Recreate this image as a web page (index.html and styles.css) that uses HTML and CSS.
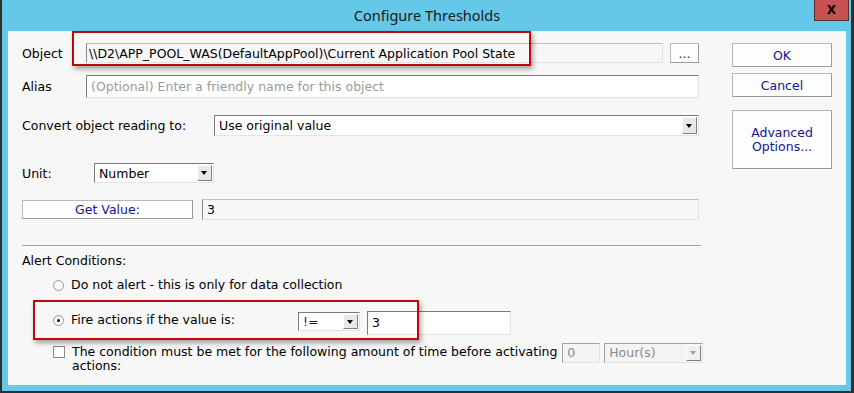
FILE: index.html
```html
<!DOCTYPE html>
<html lang="en">
<head>
    <meta charset="UTF-8">
    <title>Configure Thresholds</title>
    <link rel="stylesheet" href="styles.css">
</head>
<body>
    <div class="window">
        <div class="titlebar">
            <span></span>
            <div class="title">Configure Thresholds</div>
            <button class="close">X</button>
        </div>
        <div class="client">
            <div class="highlight hl-object"></div>
            <div class="highlight hl-fire"></div>

            <div class="form">
                <div class="row row-object">
                    <label class="lbl lbl-object">Object</label>
                    <div class="field readonly f-object">\\D2\APP_POOL_WAS(DefaultAppPool)\Current Application Pool State</div>
                    <button class="btn btn-browse">...</button>
                </div>
                <div class="row row-alias">
                    <label class="lbl lbl-object">Alias</label>
                    <div class="field f-alias placeholder">(Optional) Enter a friendly name for this object</div>
                </div>
                <div class="row row-convert">
                    <label class="lbl lbl-convert">Convert object reading to:</label>
                    <div class="field select f-convert"><span>Use original value</span><i class="arrow"></i></div>
                </div>
                <div class="row row-unit">
                    <label class="lbl lbl-unit">Unit:</label>
                    <div class="field select f-unit"><span>Number</span><i class="arrow"></i></div>
                </div>
                <div class="row row-get">
                    <button class="btn btn-get">Get Value:</button>
                    <div class="field readonly f-value">3</div>
                </div>
                <div class="separator"></div>
                <div class="section-title">Alert Conditions:</div>
                <div class="option opt-none">
                    <span class="radio"></span>
                    <span>Do not alert - this is only for data collection</span>
                </div>
                <div class="option opt-fire">
                    <div class="fire-label">
                        <span class="radio checked"></span>
                        <span>Fire actions if the value is:</span>
                    </div>
                    <div class="field select f-op"><span class="op">!=</span><i class="arrow"></i></div>
                    <div class="field f-threshold">3</div>
                </div>
                <div class="option opt-time">
                    <span class="checkbox"></span>
                    <span class="time-text">The condition must be met for the following amount of time before activating<br>actions:</span>
                    <div class="field disabled f-amount">0</div>
                    <div class="field select disabled f-period"><span>Hour(s)</span><i class="arrow"></i></div>
                </div>
            </div>

            <div class="side">
                <button class="btn btn-side">OK</button>
                <button class="btn btn-side">Cancel</button>
                <button class="btn btn-side btn-advanced">Advanced<br>Options...</button>
            </div>
        </div>
    </div>
</body>
</html>
```

FILE: styles.css
```css
body {
    margin: 0;
    background: #65c8e8;
}
.window {
    width: 854px;
    height: 393px;
    box-sizing: border-box;
    background: #65c8e8;
    border-left: 2px solid #303030;
    border-right: 3px solid #303030;
    border-bottom: 2px solid #303030;
    padding: 0 5px 6px 6px;
    font-family: 'DejaVu Sans', sans-serif;
    font-size: 12.5px;
    color: #000;
}
.titlebar {
    display: grid;
    grid-template-columns: 1fr auto 1fr;
    height: 31px;
}
.title {
    font-family: 'Noto Sans', sans-serif;
    font-size: 14.5px;
    color: #1a1a1a;
    padding-top: 5px;
}
.close {
    justify-self: end;
    align-self: start;
    width: 35px;
    height: 21px;
    margin-right: -3px;
    background: #c75050;
    border: 1px solid #5a3030;
    border-top: none;
    font-family: 'DejaVu Sans', sans-serif;
    font-weight: bold;
    font-size: 12px;
    color: #000;
    padding: 0;
}
.client {
    position: relative;
    height: 354px;
    background: #f7f7f7;
    display: flex;
    gap: 29px;
    padding: 12px 0 0 14px;
    box-sizing: border-box;
}
.highlight {
    position: absolute;
    border: 2px solid #bb0a0a;
    box-shadow: 2px 3px 5px rgba(0,0,0,0.35);
    box-sizing: border-box;
    pointer-events: none;
}
.hl-object { left: 64px; top: 0; width: 459px; height: 35px; }
.hl-fire { left: 25px; top: 269px; width: 386px; height: 40px; }

.form { width: 681px; }
.row { display: flex; align-items: center; }
.lbl { display: block; }
.lbl-object { width: 64px; }
.lbl-convert { width: 192px; }
.lbl-unit { width: 72px; }

.field {
    box-sizing: border-box;
    height: 100%;
    background: #fff;
    border: 1px solid #e3e3e3;
    border-top-color: #7a7a7a;
    border-left-color: #7a7a7a;
    padding: 0 4px;
    display: flex;
    align-items: center;
    white-space: nowrap;
    overflow: hidden;
}
.readonly {
    background: #f7f7f7;
    border-color: #e3e3e3;
    border-top-color: #c0c0c0;
    border-left-color: #8a8a8a;
}
.placeholder { color: #9a9a9a; }
.select { justify-content: space-between; padding: 0 1px 0 4px; }
.arrow {
    width: 15px;
    height: calc(100% - 2px);
    box-sizing: border-box;
    background: #e8e8e8;
    border: 1px solid #fff;
    border-right-color: #808080;
    border-bottom-color: #808080;
    position: relative;
    flex: none;
}
.arrow::after {
    content: "";
    position: absolute;
    left: 3px;
    top: 50%;
    margin-top: -2px;
    border-left: 3.5px solid transparent;
    border-right: 3.5px solid transparent;
    border-top: 4px solid #000;
}
.disabled { background: #f4f4f4; color: #8a8a8a; border-top-color: #a0a0a0; border-left-color: #a0a0a0; }
.disabled .arrow { background: #f0f0f0; }
.disabled .arrow::after { border-top-color: #a0a0a0; }

.btn {
    font-family: 'DejaVu Sans', sans-serif;
    font-size: 12.5px;
    color: #15158c;
    background: #fdfdfd;
    border: 1px solid #b8b8b8;
    border-right-color: #9a9a9a;
    border-bottom-color: #9a9a9a;
    border-radius: 1px;
    padding: 0;
}

.row-object { height: 20px; }
.f-object { width: 577px; padding-left: 2px; }
.btn-browse { width: 29px; height: 20px; margin-left: 7px; color: #222; }

.row-alias { height: 23px; margin-top: 12px; }
.f-alias { width: 613px; }

.row-convert { height: 21px; margin-top: 17px; }
.f-convert { width: 485px; }

.row-unit { height: 20px; margin-top: 27px; }
.f-unit { width: 120px; }

.row-get { height: 21px; margin-top: 16px; }
.btn-get { width: 171px; height: 19px; }
.f-value { width: 497px; margin-left: 9px; }

.separator {
    width: 679px;
    margin-top: 25px;
    border-top: 1px solid #a0a0a0;
    border-bottom: 1px solid #fff;
}
.section-title { margin-top: 7px; line-height: 14px; }

.option { display: flex; padding-left: 31px; line-height: 14px; }
.opt-none { align-items: center; margin-top: 9px; height: 16px; gap: 7px; }
.opt-fire { margin-top: 18px; height: 24px; align-items: flex-start; }
.fire-label { display: flex; align-items: center; gap: 7px; width: 245px; margin-top: 2px; height: 14px; }
.f-op { width: 62px; height: 19px; margin-top: 1px; }
.op { color: #3a0a5a; }
.f-threshold { width: 144px; height: 24px; margin-left: 7px; }

.opt-time { margin-top: 8px; align-items: flex-start; height: 34px; }
.time-text { margin-left: 7px; width: 491px; padding-top: 2px; }
.f-amount { width: 38px; height: 20px; }
.f-period { width: 99px; height: 20px; margin-left: 4px; }

.radio {
    width: 11px;
    height: 11px;
    box-sizing: border-box;
    border-radius: 50%;
    border: 1px solid #9a9a9a;
    background: radial-gradient(circle at 60% 60%, #fff 40%, #e6e6e6 100%);
    position: relative;
    flex: none;
}
.radio.checked::after {
    content: "";
    position: absolute;
    left: 3px;
    top: 3px;
    width: 3px;
    height: 3px;
    border-radius: 50%;
    background: #111;
}
.checkbox {
    width: 12px;
    height: 12px;
    box-sizing: border-box;
    border: 1px solid #8a8a8a;
    background: #fff;
    flex: none;
    margin-top: 3px;
}

.side { width: 100px; display: flex; flex-direction: column; }
.btn-side { height: 24px; }
.btn-side + .btn-side { margin-top: 6px; }
.btn-advanced { height: 59px; margin-top: 13px !important; line-height: 14px; }
```
